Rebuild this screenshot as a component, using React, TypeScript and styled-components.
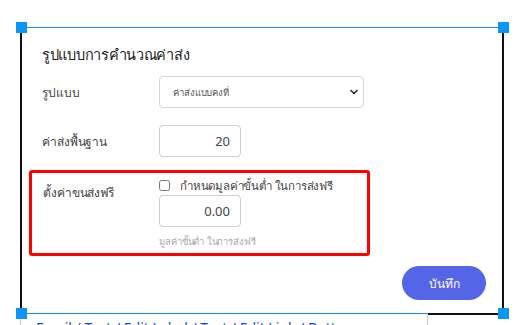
import React from 'react'
import styled, { createGlobalStyle } from 'styled-components'
import { ChevronDown } from 'lucide-react'

const GlobalStyle = createGlobalStyle`
  html, body {
    margin: 0;
    padding: 0;
    background: #fff;
  }
  body {
    font-family: 'Noto Sans', 'DejaVu Sans', sans-serif;
    color: #444;
  }
`

const Canvas = styled.div`
  width: 528px;
  height: 325px;
  overflow: hidden;
  background: #fff;
  padding-top: 27px;
  box-sizing: border-box;
`

const Frame = styled.div`
  position: relative;
  margin-left: 20px;
  width: 484px;
  height: 288px;
  box-sizing: border-box;
  border-left: 2px solid #111;
  border-right: 2px solid #111;
  border-top: 1px solid #1a8cf0;
  border-bottom: 2px solid #111;
  padding: 16px 16px 0 19px;
  display: flex;
  flex-direction: column;
`

const Handle = styled.span<{ $v: 'top' | 'bottom'; $h: 'left' | 'right' }>`
  position: absolute;
  width: 11px;
  height: 11px;
  background: #0a96f5;
  ${(p) => (p.$v === 'top' ? 'top: -6px;' : 'bottom: -6px;')}
  ${(p) => (p.$h === 'left' ? 'left: -6px;' : 'right: -7px;')}
  z-index: 3;
`

const Title = styled.h3`
  margin: 0 0 12px 1px;
  font-size: 14.5px;
  letter-spacing: -0.3px;
  line-height: 20px;
  font-weight: 400;
  color: #222;
`

const Row = styled.div`
  display: grid;
  grid-template-columns: 118px auto;
  align-items: center;
  margin-bottom: 17px;
`

const HighlightRow = styled.div`
  display: grid;
  grid-template-columns: 118px auto;
  align-items: start;
  width: 341px;
  box-sizing: border-box;
  margin: -4px 0 0 -12px;
  padding: 5px 3px 4px 9px;
  border: 3px solid #ff0000;
  border-radius: 3px;
`

const Label = styled.label`
  font-size: 12px;
  letter-spacing: -0.1px;
  color: #444;
  padding-left: 1px;
`

const TopLabel = styled(Label)`
  padding-top: 5px;
  padding-left: 2px;
`

const SelectWrap = styled.div`
  position: relative;
  width: 205px;
`

const Select = styled.select`
  appearance: none;
  width: 100%;
  height: 32px;
  border: 1px solid #d4d4d8;
  border-radius: 4px;
  background: #fff;
  padding: 0 24px 0 13px;
  font-family: inherit;
  font-size: 9.5px;
  letter-spacing: -0.1px;
  color: #555;
`

const Chevron = styled(ChevronDown)`
  position: absolute;
  right: 4px;
  top: 10px;
  color: #333;
  pointer-events: none;
`

const NumberInput = styled.input`
  width: 82px;
  height: 32px;
  box-sizing: border-box;
  border: 1px solid #cfcfd4;
  border-radius: 4px;
  text-align: right;
  padding: 0 10px;
  font-family: inherit;
  font-size: 13px;
  color: #444;
`

const Controls = styled.div`
  display: flex;
  flex-direction: column;
  align-items: flex-start;
`

const CheckLine = styled.label`
  display: flex;
  align-items: center;
  gap: 10px;
  height: 15px;
  font-size: 11.5px;
  letter-spacing: -0.2px;
  color: #444;
  margin-bottom: 2px;
`

const Check = styled.input`
  width: 11px;
  height: 11px;
  margin: 0;
`

const Hint = styled.div`
  margin-top: 7px;
  font-size: 9.5px;
  letter-spacing: -0.1px;
  color: #a8a8b0;
`

const Footer = styled.div`
  display: flex;
  justify-content: flex-end;
  margin-top: 10px;
`

const SaveButton = styled.button`
  width: 84px;
  height: 34px;
  border: none;
  border-radius: 17px;
  background: #5465e8;
  color: #fff;
  font-family: inherit;
  font-size: 12px;
  cursor: pointer;
`

const NextBlock = styled.div`
  position: relative;
  margin: -2px 0 0 20px;
  width: 408px;
  height: 20px;
  box-sizing: border-box;
  border-top: 1px solid #1a8cf0;
  border-left: 1px solid #ccc;
  border-right: 1px solid #ccc;
  background: #fff;
  padding: 5px 0 0 15px;
  font-size: 14px;
  line-height: 18px;
  color: #2347c8;
  white-space: nowrap;
  overflow: hidden;
`

export default function App() {
  return (
    <>
      <GlobalStyle />
      <Canvas>
        <Frame>
          <Handle $v="top" $h="left" />
          <Handle $v="top" $h="right" />
          <Handle $v="bottom" $h="left" />
          <Handle $v="bottom" $h="right" />

          <Title>รูปแบบการคำนวณค่าส่ง</Title>

          <Row>
            <Label>รูปแบบ</Label>
            <SelectWrap>
              <Select defaultValue="fixed">
                <option value="fixed">ค่าส่งแบบคงที่</option>
              </Select>
              <Chevron size={12} strokeWidth={3.5} />
            </SelectWrap>
          </Row>

          <Row>
            <Label>ค่าส่งพื้นฐาน</Label>
            <NumberInput defaultValue="20" />
          </Row>

          <HighlightRow>
            <TopLabel>ตั้งค่าขนส่งฟรี</TopLabel>
            <Controls>
              <CheckLine>
                <Check type="checkbox" />
                กำหนดมูลค่าขั้นต่ำ ในการส่งฟรี
              </CheckLine>
              <NumberInput defaultValue="0.00" />
              <Hint>มูลค่าขั้นต่ำ ในการส่งฟรี</Hint>
            </Controls>
          </HighlightRow>

          <Footer>
            <SaveButton>บันทึก</SaveButton>
          </Footer>
        </Frame>
        <NextBlock>Email / Text / Edit Label / Text / Edit Link / Button</NextBlock>
      </Canvas>
    </>
  )
}
